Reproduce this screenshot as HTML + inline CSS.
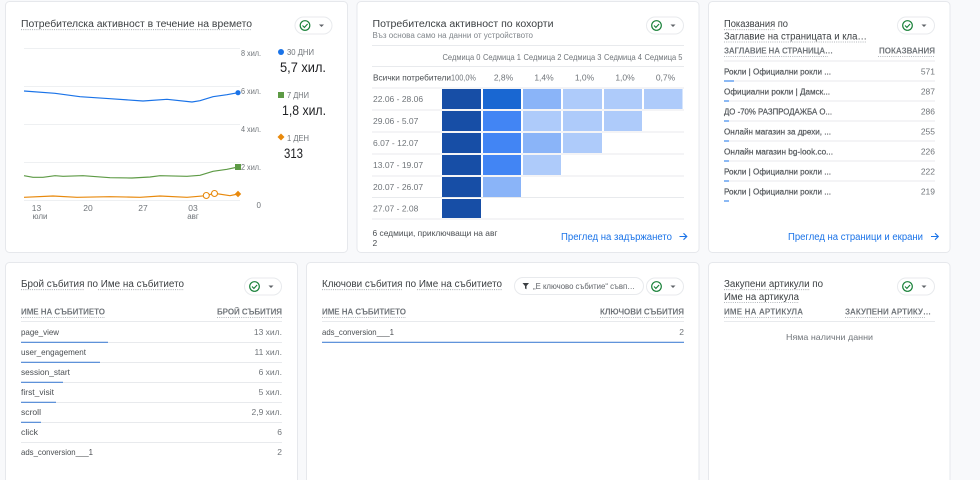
<!DOCTYPE html>
<html lang="bg"><head><meta charset="utf-8"><title>Отчет</title>
<style>
html,body{margin:0;padding:0;background:#f8f9fb;width:980px;height:480px;overflow:hidden}
svg{display:block;filter:blur(.3px)}
text{font-family:"Liberation Sans",sans-serif;font-size:9px;fill:#5f6368}
.t{font-size:10px;fill:#3c4043}
.h{font-size:8px;font-weight:700;fill:#70757a}
.r{font-size:8.5px;fill:#4a4e52}
.b{font-size:8.5px;fill:#55595d;stroke:#55595d;stroke-width:.22}
.l{font-size:10px;fill:#1a73e8}
.a{font-size:8.5px;fill:#70757a}
.c{font-size:8px;fill:#70757a}
.e{text-anchor:end}
.m{text-anchor:middle}
.d{stroke:#9aa0a6;stroke-width:.8;stroke-dasharray:1 1.2;fill:none}
.g{stroke:#e8eaed;stroke-width:1;fill:none}
.card{fill:#fff;stroke:#e6e8ec;stroke-width:1}
</style></head><body>
<svg width="980" height="480" viewBox="0 0 980 480" xmlns="http://www.w3.org/2000/svg">
<defs>
<g id="pill">
<rect x=".5" y=".5" width="37" height="17" rx="8.5" fill="#fff" stroke="#e8eaed"/>
<circle cx="10.5" cy="9" r="4.8" fill="none" stroke="#188038" stroke-width="1.2"/>
<path d="M8 9l1.9 1.9 3.2-3.4" fill="none" stroke="#188038" stroke-width="1.1"/>
<path d="M24.5 8h5l-2.500 2.500z" fill="#5f6368"/>
</g>
<path id="arrow" d="M0 4h7M4 .8L7.300 4 4 7.200" fill="none" stroke="#1a73e8" stroke-width="1.100"/>
</defs>

<rect class="card" x="5.5" y="1.5" width="342" height="251" rx="4"/>
<rect class="card" x="357" y="1.5" width="342" height="251" rx="4"/>
<rect class="card" x="708.5" y="1.5" width="241.5" height="251" rx="4"/>
<rect class="card" x="5.5" y="262.5" width="292" height="240" rx="4"/>
<rect class="card" x="306.5" y="262.5" width="392.5" height="240" rx="4"/>
<rect class="card" x="708.5" y="262.5" width="241.5" height="240" rx="4"/>

<!-- Card 1 -->
<text class="t" x="21" y="27" textLength="231" lengthAdjust="spacingAndGlyphs">Потребителска активност в течение на времето</text>
<path class="d" d="M21 29.700H252"/>
<use href="#pill" x="294.500" y="16.500"/>
<path d="M24 48.500H240M24 86.500H240M24 124.500H240M24 162.500H240M24 200.500H240" stroke="#eef0f2" fill="none"/>
<text class="c e" x="261" y="56" textLength="20" lengthAdjust="spacingAndGlyphs">8 хил.</text>
<text class="c e" x="261" y="94" textLength="20" lengthAdjust="spacingAndGlyphs">6 хил.</text>
<text class="c e" x="261" y="132" textLength="20" lengthAdjust="spacingAndGlyphs">4 хил.</text>
<text class="c e" x="261" y="170" textLength="20" lengthAdjust="spacingAndGlyphs">2 хил.</text>
<text class="c e" x="261" y="208">0</text>
<path d="M24 91L55 93.300 80 96.700 110 98.700 143 101 167 99.300 192 102 200 100.700 213 96.700 227 94.700 238 92.700" fill="none" stroke="#1a73e8" stroke-width="1.200"/>
<path d="M24 175.700L33 177.300 43 177.300 55 175.700 63 176.300 83 175.700 110 177.700 132 178 150 177 160 175.700 187 176.300 200 175.300 213 171.300 227 169.300 238 167" fill="none" stroke="#5d9a45" stroke-width="1.200"/>
<path d="M24 197.300L53 196 77 197.300 110 196.700 140 197.300 160 196 187 197.300 206 195.700 214 193.300 230 195.700 238 194" fill="none" stroke="#e8890c" stroke-width="1.200"/>
<circle cx="206.300" cy="195.500" r="3" fill="#fff" stroke="#e8890c" stroke-width="1.100"/>
<circle cx="214.500" cy="193.500" r="3" fill="#fff" stroke="#e8890c" stroke-width="1.100"/>
<circle cx="238" cy="92.700" r="2.600" fill="#1a73e8"/>
<rect x="235" y="164" width="6" height="6" fill="#5d9a45"/>
<path d="M238 190.800L241.200 194 238 197.200 234.800 194z" fill="#e8890c"/>
<text class="a m" x="36.500" y="211">13</text>
<text class="c m" x="40" y="219">юли</text>
<text class="a m" x="88" y="211">20</text>
<text class="a m" x="143" y="211">27</text>
<text class="a m" x="193" y="211">03</text>
<text class="c m" x="193" y="219">авг</text>
<circle cx="281" cy="52" r="3" fill="#1a73e8"/>
<text class="a" x="287" y="55" textLength="27" lengthAdjust="spacingAndGlyphs">30 ДНИ</text>
<text x="280" y="72" style="font-size:14px;fill:#202124" textLength="46" lengthAdjust="spacingAndGlyphs">5,7 хил.</text>
<rect x="278" y="92" width="6" height="6" fill="#5d9a45"/>
<text class="a" x="287" y="98" textLength="22" lengthAdjust="spacingAndGlyphs">7 ДНИ</text>
<text x="282" y="115" style="font-size:14px;fill:#202124" textLength="44" lengthAdjust="spacingAndGlyphs">1,8 хил.</text>
<path d="M281 133.500L284.500 137 281 140.500 277.500 137z" fill="#e8890c"/>
<text class="a" x="287" y="141" textLength="22" lengthAdjust="spacingAndGlyphs">1 ДЕН</text>
<text x="284" y="158" style="font-size:14px;fill:#202124" textLength="19" lengthAdjust="spacingAndGlyphs">313</text>

<!-- Card 2 -->
<text class="t" x="372.500" y="27" textLength="181" lengthAdjust="spacingAndGlyphs">Потребителска активност по кохорти</text>
<text x="372.500" y="38" style="font-size:8px;fill:#80868b" textLength="160.500" lengthAdjust="spacingAndGlyphs">Въз основа само на данни от устройството</text>
<use href="#pill" x="646" y="16.500"/>
<path class="g" d="M372 45.500H684M372 66.500H684M372 88H684M372 110H684M372 132H684M372 154H684M372 176H684M372 197.500H684M372 219H684"/>
<text class="a" x="442.500" y="60" textLength="38" lengthAdjust="spacingAndGlyphs">Седмица 0</text>
<text class="a" x="483" y="60" textLength="38" lengthAdjust="spacingAndGlyphs">Седмица 1</text>
<text class="a" x="523.500" y="60" textLength="38" lengthAdjust="spacingAndGlyphs">Седмица 2</text>
<text class="a" x="563.500" y="60" textLength="38" lengthAdjust="spacingAndGlyphs">Седмица 3</text>
<text class="a" x="604" y="60" textLength="38" lengthAdjust="spacingAndGlyphs">Седмица 4</text>
<text class="a" x="644.500" y="60" textLength="38" lengthAdjust="spacingAndGlyphs">Седмица 5</text>
<text class="r" x="373" y="80.500" textLength="78" lengthAdjust="spacingAndGlyphs">Всички потребители</text>
<text class="a" x="451" y="80.500" textLength="25" lengthAdjust="spacingAndGlyphs">100,0%</text>
<text class="a m" x="503.500" y="80.500">2,8%</text>
<text class="a m" x="544" y="80.500">1,4%</text>
<text class="a m" x="584.500" y="80.500">1,0%</text>
<text class="a m" x="625" y="80.500">1,0%</text>
<text class="a m" x="665.500" y="80.500">0,7%</text>
<g fill="#174ea6">
<rect x="442" y="89" width="39" height="20"/><rect x="442" y="111" width="39" height="20"/><rect x="442" y="133" width="39" height="20"/><rect x="442" y="155" width="39" height="20"/><rect x="442" y="177" width="39" height="20"/><rect x="442" y="199" width="39" height="19"/>
</g>
<rect x="483" y="89" width="38" height="20" fill="#1967d2"/>
<rect x="483" y="111" width="38" height="20" fill="#4285f4"/>
<rect x="483" y="133" width="38" height="20" fill="#4285f4"/>
<rect x="483" y="155" width="38" height="20" fill="#4285f4"/>
<rect x="483" y="177" width="38" height="20" fill="#8ab4f8"/>
<rect x="523" y="89" width="38" height="20" fill="#8ab4f8"/>
<rect x="523" y="111" width="38" height="20" fill="#aecbfa"/>
<rect x="523" y="133" width="38" height="20" fill="#8ab4f8"/>
<rect x="523" y="155" width="38" height="20" fill="#aecbfa"/>
<rect x="563" y="89" width="39" height="20" fill="#aecbfa"/>
<rect x="563" y="111" width="39" height="20" fill="#aecbfa"/>
<rect x="563" y="133" width="39" height="20" fill="#aecbfa"/>
<rect x="604" y="89" width="38" height="20" fill="#aecbfa"/>
<rect x="604" y="111" width="38" height="20" fill="#aecbfa"/>
<rect x="644" y="89" width="38.500" height="20" fill="#aecbfa"/>
<text class="a" x="373" y="102">22.06 - 28.06</text>
<text class="a" x="373" y="124">29.06 - 5.07</text>
<text class="a" x="373" y="146">6.07 - 12.07</text>
<text class="a" x="373" y="168">13.07 - 19.07</text>
<text class="a" x="373" y="190">20.07 - 26.07</text>
<text class="a" x="373" y="211.500">27.07 - 2.08</text>
<text class="r" x="372.500" y="236" textLength="125" lengthAdjust="spacingAndGlyphs">6 седмици, приключващи на авг</text>
<text class="r" x="372.500" y="246">2</text>
<text class="l" x="561" y="240" textLength="111" lengthAdjust="spacingAndGlyphs">Преглед на задържането</text>
<use href="#arrow" x="679.500" y="232.500"/>

<!-- Card 3 -->
<text class="t" x="724" y="27" textLength="64" lengthAdjust="spacingAndGlyphs">Показвания по</text>
<path class="d" d="M724 29.700H775"/>
<text class="t" x="724" y="39.500" textLength="143" lengthAdjust="spacingAndGlyphs">Заглавие на страницата и кла…</text>
<path class="d" d="M724 42H867"/>
<use href="#pill" x="897" y="16.500"/>
<text class="h" x="724" y="53.500" textLength="109" lengthAdjust="spacing">ЗАГЛАВИЕ НА СТРАНИЦА…</text>
<path class="d" d="M724 56.500H828"/>
<text class="h" x="879" y="53.500" textLength="56" lengthAdjust="spacing">ПОКАЗВАНИЯ</text>
<path class="d" d="M878 56.500H935"/>
<path class="g" d="M724 61H935M724 81H935M724 101H935M724 121H935M724 141H935M724 161H935M724 181H935"/>
<path d="M724 81H734M724 101H729M724 121H729M724 141H729M724 161H729M724 181H729M724 201H729" stroke="#1a73e8" stroke-width="1" fill="none"/>
<text class="b" x="724" y="74.500" textLength="107" lengthAdjust="spacingAndGlyphs">Рокли | Официални рокли ...</text>
<text class="b" x="724" y="94.500" textLength="106" lengthAdjust="spacingAndGlyphs">Официални рокли | Дамск...</text>
<text class="b" x="724" y="114.500" textLength="108" lengthAdjust="spacingAndGlyphs">ДО -70% РАЗПРОДАЖБА О...</text>
<text class="b" x="724" y="134.500" textLength="107" lengthAdjust="spacingAndGlyphs">Онлайн магазин за дрехи, ...</text>
<text class="b" x="724" y="154.500" textLength="109" lengthAdjust="spacingAndGlyphs">Онлайн магазин bg-look.co...</text>
<text class="b" x="724" y="174.500" textLength="107" lengthAdjust="spacingAndGlyphs">Рокли | Официални рокли ...</text>
<text class="b" x="724" y="194.500" textLength="107" lengthAdjust="spacingAndGlyphs">Рокли | Официални рокли ...</text>
<text class="a e" x="935" y="74.500">571</text>
<text class="a e" x="935" y="94.500">287</text>
<text class="a e" x="935" y="114.500">286</text>
<text class="a e" x="935" y="134.500">255</text>
<text class="a e" x="935" y="154.500">226</text>
<text class="a e" x="935" y="174.500">222</text>
<text class="a e" x="935" y="194.500">219</text>
<text class="l" x="788" y="240" textLength="135" lengthAdjust="spacingAndGlyphs">Преглед на страници и екрани</text>
<use href="#arrow" x="931" y="232.500"/>

<!-- Card 4 -->
<text class="t" x="21" y="287" textLength="163" lengthAdjust="spacingAndGlyphs">Брой събития по Име на събитието</text>
<path class="d" d="M21 289.700H84M98 289.700H184"/>
<use href="#pill" x="244" y="277.500"/>
<text class="h" x="21" y="314.500" textLength="84" lengthAdjust="spacing">ИМЕ НА СЪБИТИЕТО</text>
<path class="d" d="M21 317.500H105"/>
<text class="h" x="217" y="314.500" textLength="65" lengthAdjust="spacing">БРОЙ СЪБИТИЯ</text>
<path class="d" d="M217 317.500H282"/>
<path class="g" d="M21 321.500H282M21 342.500H282M21 362.500H282M21 382.500H282M21 402.500H282M21 422.500H282M21 442.500H282"/>
<path d="M21 342.300H108M21 362.300H100M21 382.300H63M21 402.300H56M21 422.300H41" stroke="#4a85d6" stroke-width="1.200" fill="none"/>
<text class="r" x="21" y="335" textLength="38" lengthAdjust="spacingAndGlyphs">page_view</text>
<text class="r" x="21" y="355" textLength="65" lengthAdjust="spacingAndGlyphs">user_engagement</text>
<text class="r" x="21" y="375" textLength="49" lengthAdjust="spacingAndGlyphs">session_start</text>
<text class="r" x="21" y="395" textLength="33" lengthAdjust="spacingAndGlyphs">first_visit</text>
<text class="r" x="21" y="415" textLength="20" lengthAdjust="spacingAndGlyphs">scroll</text>
<text class="r" x="21" y="435" textLength="17" lengthAdjust="spacingAndGlyphs">click</text>
<text class="r" x="21" y="455" textLength="72" lengthAdjust="spacingAndGlyphs">ads_conversion___1</text>
<text class="a e" x="282" y="335">13 хил.</text>
<text class="a e" x="282" y="355">11 хил.</text>
<text class="a e" x="282" y="375">6 хил.</text>
<text class="a e" x="282" y="395">5 хил.</text>
<text class="a e" x="282" y="415">2,9 хил.</text>
<text class="a e" x="282" y="435">6</text>
<text class="a e" x="282" y="455">2</text>

<!-- Card 5 -->
<text class="t" x="322" y="287" textLength="180" lengthAdjust="spacingAndGlyphs">Ключови събития по Име на събитието</text>
<path class="d" d="M322 289.700H402M417 289.700H502"/>
<rect x="514.500" y="277.500" width="129" height="17" rx="8.500" fill="#fff" stroke="#e8eaed"/>
<path d="M522.500 283h6.500l-2.500 3v3.300l-1.500-.8v-2.500z" fill="#3c4043"/>
<text x="533" y="289" style="font-size:8px;fill:#5f6368" textLength="102" lengthAdjust="spacingAndGlyphs">„Е ключово събитие“ съвп…</text>
<use href="#pill" x="646" y="277.500"/>
<text class="h" x="322" y="314.500" textLength="84" lengthAdjust="spacing">ИМЕ НА СЪБИТИЕТО</text>
<path class="d" d="M322 317.500H406"/>
<text class="h" x="600" y="314.500" textLength="84" lengthAdjust="spacing">КЛЮЧОВИ СЪБИТИЯ</text>
<path class="d" d="M600 317.500H684"/>
<path class="g" d="M322 321.500H684"/>
<path d="M322 342.300H684" stroke="#4a85d6" stroke-width="1.200" fill="none"/>
<text class="r" x="322" y="335" textLength="72" lengthAdjust="spacingAndGlyphs">ads_conversion___1</text>
<text class="a e" x="684" y="335">2</text>

<!-- Card 6 -->
<text class="t" x="724" y="287" textLength="99" lengthAdjust="spacingAndGlyphs">Закупени артикули по</text>
<path class="d" d="M724 289.700H810"/>
<text class="t" x="724" y="300" textLength="75" lengthAdjust="spacingAndGlyphs">Име на артикула</text>
<path class="d" d="M724 302.500H799"/>
<use href="#pill" x="897" y="277.500"/>
<text class="h" x="724" y="314.500" textLength="79" lengthAdjust="spacing">ИМЕ НА АРТИКУЛА</text>
<path class="d" d="M724 317.500H803"/>
<text class="h" x="845" y="314.500" textLength="86" lengthAdjust="spacing">ЗАКУПЕНИ АРТИКУ…</text>
<path class="d" d="M845 317.500H925"/>
<path class="g" d="M724 321.500H935"/>
<text class="a m" x="829.500" y="340" textLength="87" lengthAdjust="spacingAndGlyphs">Няма налични данни</text>
</svg>
</body></html>
